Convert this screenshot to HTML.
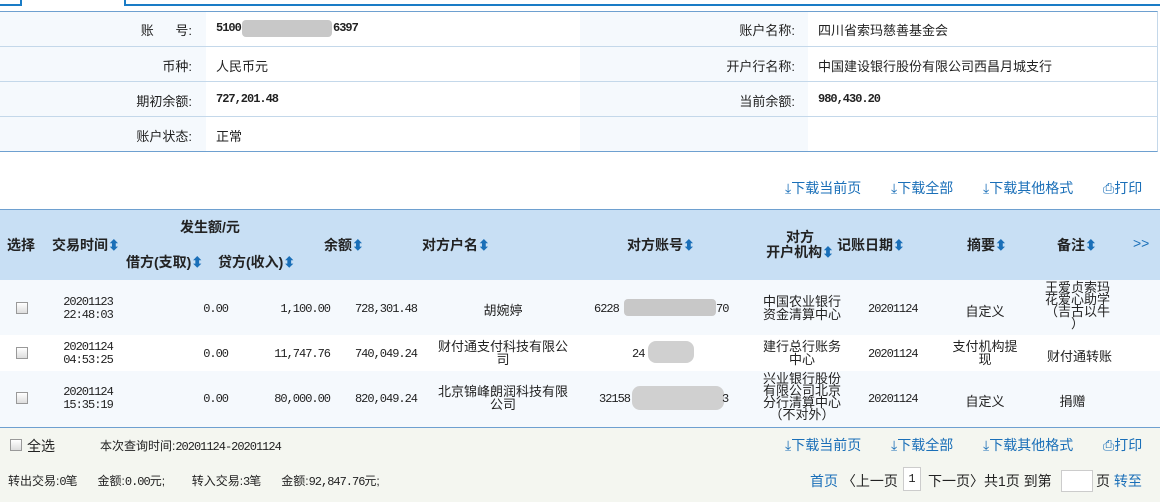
<!DOCTYPE html>
<html><head><meta charset="utf-8"><style>
*{margin:0;padding:0;box-sizing:border-box}
body{width:1160px;height:502px;overflow:hidden;background:#fff;font-family:"Liberation Sans","Noto Sans CJK SC",sans-serif;font-size:13px;color:#222;position:relative}
.a{position:absolute;white-space:nowrap}
.m{font-family:"Liberation Mono","DejaVu Sans Mono","Noto Sans CJK SC",monospace;font-size:12px;letter-spacing:-1px}
.b{font-weight:bold}
.h{font-weight:bold;font-size:14px}
.r{text-align:right}.c{text-align:center}
.hl{position:absolute;height:1px}
.blue{color:#1a6fb8}
.tb{color:#1a6fb8;font-size:14px}
.cb{position:absolute;width:12px;height:12px;border:1px solid #999;background:linear-gradient(#fff,#ddd)}
.ml{line-height:13px;white-space:normal}
</style></head><body>
<div class="hl" style="left:0;top:4px;width:21px;height:2px;background:#1a7cc6"></div>
<div class="a" style="left:20px;top:0;width:2px;height:6px;background:#1a7cc6"></div>
<div class="a" style="left:124px;top:0;width:2px;height:6px;background:#1a7cc6"></div>
<div class="hl" style="left:124px;top:4px;width:1036px;height:2px;background:#1a7cc6"></div>
<div class="a" style="left:0;top:11px;width:1158px;height:141px;border-top:1px solid #6ea0d0;border-bottom:1px solid #6ea0d0;border-right:1px solid #c4d8ea"></div>
<div class="a" style="left:0;top:12px;width:206px;height:139px;background:#f5f9fd"></div>
<div class="a" style="left:580px;top:12px;width:228px;height:139px;background:#f5f9fd"></div>
<div class="hl" style="left:0;top:46px;width:1158px;background:#c4d8ea"></div>
<div class="hl" style="left:0;top:81px;width:1158px;background:#c4d8ea"></div>
<div class="hl" style="left:0;top:116px;width:1158px;background:#c4d8ea"></div>
<div class="a r" style="left:80px;width:112px;top:20px">账&nbsp;&nbsp;&nbsp;&nbsp;&nbsp;&nbsp;号:</div>
<div class="a m b" style="left:216px;top:21px">5100</div>
<div class="a" style="left:242px;top:20px;width:90px;height:17px;background:#c8c8c8;border-radius:4px"></div>
<div class="a m b" style="left:333px;top:21px">6397</div>
<div class="a r" style="left:80px;width:112px;top:56px">币种:</div>
<div class="a" style="left:216px;top:56px">人民币元</div>
<div class="a r" style="left:80px;width:112px;top:91px">期初余额:</div>
<div class="a m b" style="left:216px;top:92px">727,201.48</div>
<div class="a r" style="left:80px;width:112px;top:126px">账户状态:</div>
<div class="a" style="left:216px;top:126px">正常</div>
<div class="a r" style="left:680px;width:115px;top:20px">账户名称:</div>
<div class="a" style="left:818px;top:20px">四川省索玛慈善基金会</div>
<div class="a r" style="left:680px;width:115px;top:56px">开户行名称:</div>
<div class="a" style="left:818px;top:56px">中国建设银行股份有限公司西昌月城支行</div>
<div class="a r" style="left:680px;width:115px;top:91px">当前余额:</div>
<div class="a m b" style="left:818px;top:92px">980,430.20</div>
<div class="a tb" style="left:785px;top:178px">⤓下载当前页</div>
<div class="a tb" style="left:891px;top:178px">⤓下载全部</div>
<div class="a tb" style="left:983px;top:178px">⤓下载其他格式</div>
<div class="a tb" style="left:1103px;top:178px">⎙打印</div>
<div class="a" style="left:0;top:209px;width:1160px;height:71px;background:#c8dff4;border-top:1px solid #6ea0d0"></div>
<div class="a h" style="left:7px;top:235px">选择</div>
<div class="a h" style="left:52px;top:235px">交易时间<span class="blue">⬍</span></div>
<div class="a h" style="left:180px;top:217px">发生额/元</div>
<div class="a h" style="left:126px;top:252px">借方(支取)<span class="blue">⬍</span></div>
<div class="a h" style="left:218px;top:252px">贷方(收入)<span class="blue">⬍</span></div>
<div class="a h" style="left:324px;top:235px">余额<span class="blue">⬍</span></div>
<div class="a h" style="left:422px;top:235px">对方户名<span class="blue">⬍</span></div>
<div class="a h" style="left:627px;top:235px">对方账号<span class="blue">⬍</span></div>
<div class="a h c ml" style="left:755px;width:90px;top:230px;line-height:15px">对方<br>开户机构<span class="blue">⬍</span></div>
<div class="a h" style="left:837px;top:235px">记账日期<span class="blue">⬍</span></div>
<div class="a h" style="left:967px;top:235px">摘要<span class="blue">⬍</span></div>
<div class="a h" style="left:1057px;top:235px">备注<span class="blue">⬍</span></div>
<div class="a blue" style="left:1133px;top:235px;font-size:14px">&gt;&gt;</div>
<div class="a" style="left:0;top:280px;width:1160px;height:55px;background:#f5f9fd"></div>
<div class="a" style="left:0;top:371px;width:1160px;height:56px;background:#f5f9fd"></div>
<div class="cb" style="left:16px;top:302px"></div>
<div class="cb" style="left:16px;top:347px"></div>
<div class="cb" style="left:16px;top:392px"></div>
<div class="a m c ml" style="left:50px;width:76px;top:296px">20201123<br>22:48:03</div>
<div class="a m r" style="left:150px;width:78px;top:302px">0.00</div>
<div class="a m r" style="left:240px;width:90px;top:302px">1,100.00</div>
<div class="a m r" style="left:330px;width:87px;top:302px">728,301.48</div>
<div class="a c" style="left:430px;width:146px;top:300px">胡婉婷</div>
<div class="a m" style="left:594px;top:302px">6228</div>
<div class="a" style="left:624px;top:299px;width:92px;height:17px;background:#c8c8c8;border-radius:4px"></div>
<div class="a m" style="left:716px;top:302px">70</div>
<div class="a c ml" style="left:752px;width:100px;top:295px">中国农业银行<br>资金清算中心</div>
<div class="a m" style="left:868px;top:302px">20201124</div>
<div class="a c" style="left:955px;width:60px;top:301px">自定义</div>
<div class="a c ml" style="left:1035px;width:85px;top:282px;line-height:12px">王爱贞索玛<br>花爱心助学<br>（吉古以牛<br>）</div>
<div class="a m c ml" style="left:50px;width:76px;top:341px">20201124<br>04:53:25</div>
<div class="a m r" style="left:150px;width:78px;top:347px">0.00</div>
<div class="a m r" style="left:240px;width:90px;top:347px">11,747.76</div>
<div class="a m r" style="left:330px;width:87px;top:347px">740,049.24</div>
<div class="a c ml" style="left:428px;width:150px;top:340px">财付通支付科技有限公<br>司</div>
<div class="a m" style="left:632px;top:347px">24</div>
<div class="a" style="left:648px;top:341px;width:46px;height:22px;background:#d0d0d0;border-radius:8px"></div>
<div class="a c ml" style="left:752px;width:100px;top:340px">建行总行账务<br>中心</div>
<div class="a m" style="left:868px;top:347px">20201124</div>
<div class="a c ml" style="left:945px;width:80px;top:340px">支付机构提<br>现</div>
<div class="a c" style="left:1032px;width:95px;top:346px">财付通转账</div>
<div class="a m c ml" style="left:50px;width:76px;top:386px">20201124<br>15:35:19</div>
<div class="a m r" style="left:150px;width:78px;top:392px">0.00</div>
<div class="a m r" style="left:240px;width:90px;top:392px">80,000.00</div>
<div class="a m r" style="left:330px;width:87px;top:392px">820,049.24</div>
<div class="a c ml" style="left:428px;width:150px;top:385px">北京锦峰朗润科技有限<br>公司</div>
<div class="a m" style="left:599px;top:392px">32158</div>
<div class="a" style="left:632px;top:386px;width:92px;height:24px;background:#d0d0d0;border-radius:8px"></div>
<div class="a m" style="left:722px;top:392px">3</div>
<div class="a c ml" style="left:752px;width:100px;top:373px;line-height:12px">兴业银行股份<br>有限公司北京<br>分行清算中心<br>（不对外）</div>
<div class="a m" style="left:868px;top:392px">20201124</div>
<div class="a c" style="left:955px;width:60px;top:391px">自定义</div>
<div class="a c" style="left:1040px;width:65px;top:391px">捐赠</div>
<div class="a" style="left:0;top:427px;width:1160px;height:75px;background:#f4f6f0;border-top:1px solid #6ea0d0"></div>
<div class="cb" style="left:10px;top:439px"></div>
<div class="a" style="left:27px;top:436px;font-size:14px">全选</div>
<div class="a" style="left:100px;top:437px;font-size:12px">本次查询时间:<span class="m">20201124-20201124</span></div>
<div class="a tb" style="left:785px;top:435px">⤓下载当前页</div>
<div class="a tb" style="left:891px;top:435px">⤓下载全部</div>
<div class="a tb" style="left:983px;top:435px">⤓下载其他格式</div>
<div class="a tb" style="left:1103px;top:435px">⎙打印</div>
<div class="a" style="left:8px;top:472px;font-size:12px">转出交易:<span class="m">0</span>笔&nbsp;&nbsp;&nbsp;&nbsp;&nbsp;&nbsp;金额:<span class="m">0.00</span>元;&nbsp;&nbsp;&nbsp;&nbsp;&nbsp;&nbsp;&nbsp;&nbsp;转入交易:<span class="m">3</span>笔&nbsp;&nbsp;&nbsp;&nbsp;&nbsp;&nbsp;金额:<span class="m">92,847.76</span>元;</div>
<div class="a" style="left:810px;top:471px;font-size:14px"><span class="blue">首页</span> 〈上一页</div>
<div class="a m" style="left:903px;top:467px;width:18px;height:24px;border:1px solid #ccc;background:#fff;text-align:center;line-height:22px;letter-spacing:0">1</div>
<div class="a" style="left:928px;top:471px;font-size:14px">下一页〉共1页 到第</div>
<div class="a" style="left:1061px;top:470px;width:32px;height:22px;border:1px solid #ccc;background:#fff"></div>
<div class="a" style="left:1096px;top:471px;font-size:14px">页 <span class="blue">转至</span></div>
</body></html>
